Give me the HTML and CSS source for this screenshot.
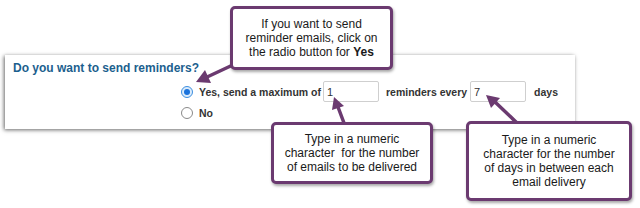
FILE: index.html
```html
<!DOCTYPE html>
<html>
<head>
  <meta charset="utf-8">
  <link rel="stylesheet" href="styles.css">
</head>
<body>
  <div class="panel">
    <h2 class="question">Do you want to send reminders?</h2>
    <div class="options">
      <label class="option-row">
        <span class="radio checked"></span>
        <span class="option-label">Yes, send a maximum of</span>
        <input class="num-input first" type="text" value="1">
        <span class="option-label mid">reminders every</span>
        <input class="num-input second" type="text" value="7">
        <span class="option-label last">days</span>
      </label>
      <label class="option-row no-row">
        <span class="radio"></span>
        <span class="option-label">No</span>
      </label>
    </div>
  </div>

  <svg class="arrows" width="640" height="208" viewBox="0 0 640 208">
    <line x1="237" y1="63" x2="206" y2="77.5" class="shaft"/>
    <polygon points="196,82 211,83 205,70" class="head"/>
    <line x1="344" y1="123" x2="338" y2="107" class="shaft"/>
    <polygon points="334,97 344,106 332,110" class="head"/>
    <line x1="516" y1="122" x2="494" y2="101" class="shaft"/>
    <polygon points="486,95 500,98 491,108" class="head"/>
  </svg>

  <div class="callout callout-yes">
    <p>If you want to send<br>reminder emails, click on<br>the radio button for <b>Yes</b></p>
  </div>
  <div class="callout callout-max">
    <p>Type in a numeric<br>character&nbsp; for the number<br>of emails to be delivered</p>
  </div>
  <div class="callout callout-days">
    <p>Type in a numeric<br>character for the number<br>of days in between each<br>email delivery</p>
  </div>
</body>
</html>
```

FILE: styles.css
```css
body {
  margin: 0;
  width: 640px;
  height: 208px;
  background: #fff;
  font-family: "Liberation Sans", Arial, sans-serif;
  position: relative;
  overflow: hidden;
}

.panel {
  margin: 55px 0 0 5px;
  width: 570px;
  height: 74px;
  box-sizing: border-box;
  padding: 6px 8px;
  background: #fff;
  box-shadow: -1px 1px 4px rgba(0, 0, 0, 0.6);
}

.question {
  margin: 0;
  font-size: 12px;
  line-height: 14px;
  font-weight: bold;
  color: #1c5f8e;
}

.options {
  margin: 6px 0 0 168px;
}

.option-row {
  display: flex;
  align-items: center;
  height: 21px;
}

.no-row {
  margin-top: 4px;
  height: 14px;
}

.radio {
  width: 10px;
  height: 10px;
  border: 1px solid #8a8a8a;
  border-radius: 50%;
  background: #fff;
  margin-right: 6px;
  position: relative;
}

.radio.checked {
  border-color: #3d8fe0;
  background: #dcecfb;
}

.radio.checked::after {
  content: "";
  position: absolute;
  left: 2px;
  top: 2px;
  width: 6px;
  height: 6px;
  border-radius: 50%;
  background: #1b73dc;
}

.option-label {
  font-size: 10.5px;
  font-weight: bold;
  color: #333;
}

.option-label.mid {
  margin: 0 3px 0 7px;
}

.option-label.last {
  margin-left: 8px;
}

.num-input {
  width: 56px;
  height: 21px;
  box-sizing: border-box;
  border: 1px solid #cfcfcf;
  border-radius: 2px;
  padding: 0 3px;
  font-family: "Liberation Sans", Arial, sans-serif;
  font-size: 11px;
  color: #333;
  outline: none;
}

.num-input.first {
  margin-left: 2px;
}

.arrows {
  position: absolute;
  left: 0;
  top: 0;
  z-index: 2;
}

.shaft {
  stroke: #6b3a70;
  stroke-width: 3.5;
  stroke-linecap: round;
}

.head {
  fill: #6b3a70;
}

.callout {
  position: absolute;
  z-index: 3;
  box-sizing: border-box;
  display: flex;
  align-items: center;
  justify-content: center;
  text-align: center;
  background: #fff;
  border: 3px solid #6b3a70;
  border-radius: 5px;
  box-shadow: 1px 2px 3px rgba(0, 0, 0, 0.35);
  font-size: 12px;
  line-height: 14px;
  color: #1a1a1a;
}

.callout p {
  margin: 0;
}

.callout-yes {
  left: 230px;
  top: 6px;
  width: 163px;
  height: 64px;
}

.callout-max {
  left: 271px;
  top: 122px;
  width: 162px;
  height: 62px;
}

.callout-days {
  left: 466px;
  top: 121px;
  width: 166px;
  height: 80px;
}
```
